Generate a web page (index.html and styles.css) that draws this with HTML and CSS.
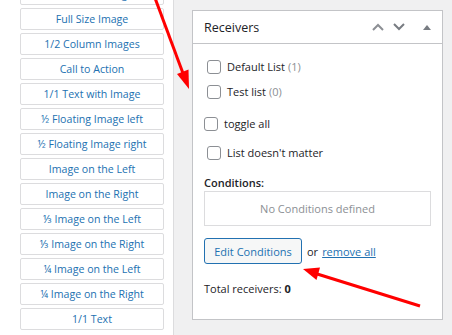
FILE: index.html
```html
<!DOCTYPE html>
<html>
<head>
<title>Receivers</title>
<link rel="stylesheet" href="styles.css">
</head>
<body>

<div class="sidebar">
	<div class="blocks">
		<div class="block">Full Width Image</div>
		<div class="block">Full Size Image</div>
		<div class="block">1/2 Column Images</div>
		<div class="block">Call to Action</div>
		<div class="block">1/1 Text with Image</div>
		<div class="block">&frac12; Floating Image left</div>
		<div class="block">&frac12; Floating Image right</div>
		<div class="block">Image on the Left</div>
		<div class="block">Image on the Right</div>
		<div class="block">&#8531; Image on the Left</div>
		<div class="block">&#8531; Image on the Right</div>
		<div class="block">&frac14; Image on the Left</div>
		<div class="block">&frac14; Image on the Right</div>
		<div class="block">1/1 Text</div>
	</div><!-- end blocks -->
</div><!-- end sidebar -->

<div class="postbox">
	<div class="postbox-header">
		<h2>Receivers</h2>
		<div class="handles">
			<svg class="up" width="14" height="10" viewBox="0 0 14 10"><path d="M2 8 L7 3 L12 8" fill="none" stroke="#8c8f94" stroke-width="2"/></svg>
			<svg class="down" width="14" height="10" viewBox="0 0 14 10"><path d="M2 2 L7 7 L12 2" fill="none" stroke="#787c82" stroke-width="2"/></svg>
			<svg class="toggle-arrow" width="14" height="10" viewBox="0 0 14 10"><path d="M3 8 L7 3 L11 8 Z" fill="#787c82"/></svg>
		</div>
	</div><!-- end header -->

	<div class="inside">
		<ul class="lists">
			<li><label><input type="checkbox"> Default List <span class="count">(1)</span></label></li>
			<li><label><input type="checkbox"> Test list <span class="count">(0)</span></label></li>
		</ul>
		<label class="check toggle"><input type="checkbox"> toggle all</label>
		<label class="check ignore"><input type="checkbox"> List doesn't matter</label>

		<div class="cond-label">Conditions:</div>
		<div class="conditions">No Conditions defined</div>

		<div class="actions">
			<button>Edit Conditions</button> or <a href="#">remove all</a>
		</div>

		<p class="total">Total receivers: <strong>0</strong></p>
	</div><!-- end inside -->
</div><!-- end postbox -->

<svg class="arrows" width="452" height="335" viewBox="0 0 452 335">
	<line x1="155" y1="-2" x2="184" y2="76" stroke="#f00" stroke-width="3"/>
	<polygon points="189,89 188.5,69.5 177,74" fill="#f00"/>
	<line x1="420" y1="306" x2="314" y2="273" stroke="#f00" stroke-width="3"/>
	<polygon points="303,269 320,267.5 316.5,280" fill="#f00"/>
</svg>

</body>
</html>
```

FILE: styles.css
```css
body {
margin: 0;
font-family: "Open Sans", "Noto Sans", sans-serif;
font-size: 11px;
color: #1d2327;
background: #f0f0f1;
display: flex;
align-items: flex-start;
height: 335px;
overflow: hidden;
}

.sidebar {
width: 153px;
height: 335px;
padding-left: 20px;
background: #fff;
border-right: 1px solid #dcdcde;
overflow: hidden;
}

.blocks {
margin-top: -17px;
display: flex;
flex-direction: column;
gap: 3px;
width: 144px;
}

.block {
height: 20px;
line-height: 20px;
border: 1px solid #dcdcde;
border-radius: 2px;
text-align: center;
font-size: 10.6px;
color: #2271b1;
white-space: nowrap;
}

.postbox {
margin: 10px 0 0 18px;
width: 249px;
height: 308px;
background: #fff;
border: 1px solid #c3c4c7;
}

.postbox-header {
display: flex;
align-items: center;
justify-content: space-between;
height: 32px;
padding: 0 8px 0 11px;
border-bottom: 1px solid #c3c4c7;
}

.postbox-header h2 {
margin: 0;
font-size: 12.5px;
font-weight: normal;
}

.handles {
display: flex;
}

.handles .down {
margin: 0 14px 0 7px;
}

.inside {
padding: 10px 11px 0 11px;
}

.lists {
list-style: none;
margin: 0;
padding: 0 0 0 3px;
}

.lists li {
height: 25px;
display: flex;
align-items: center;
}

label {
display: flex;
align-items: center;
gap: 6px;
}

.count {
color: #8c8f94;
margin-left: -3px;
}

input[type="checkbox"] {
appearance: none;
margin: 0;
width: 14px;
height: 14px;
border: 1px solid #8c8f94;
border-radius: 3px;
background: #fff;
}

.check {
height: 29px;
}

.toggle {
margin-top: 5px;
}

.ignore {
padding-left: 3px;
}

.cond-label {
margin-top: 8px;
font-weight: 600;
line-height: 16px;
}

.conditions {
margin-top: 0;
height: 33px;
line-height: 33px;
border: 1px solid #dcdcde;
text-align: center;
color: #8c8f94;
}

.actions {
margin-top: 12px;
display: flex;
align-items: center;
gap: 4px;
}

button {
height: 26px;
width: 98px;
padding: 0;
font-family: inherit;
font-size: 11px;
color: #2271b1;
background: #f6f7f7;
border: 1px solid #2271b1;
border-radius: 3px;
margin-right: 1px;
}

a {
color: #2271b1;
}

.total {
margin: 17px 0 0 0;
}

.arrows {
position: absolute;
left: 0;
top: 0;
pointer-events: none;
}
```
